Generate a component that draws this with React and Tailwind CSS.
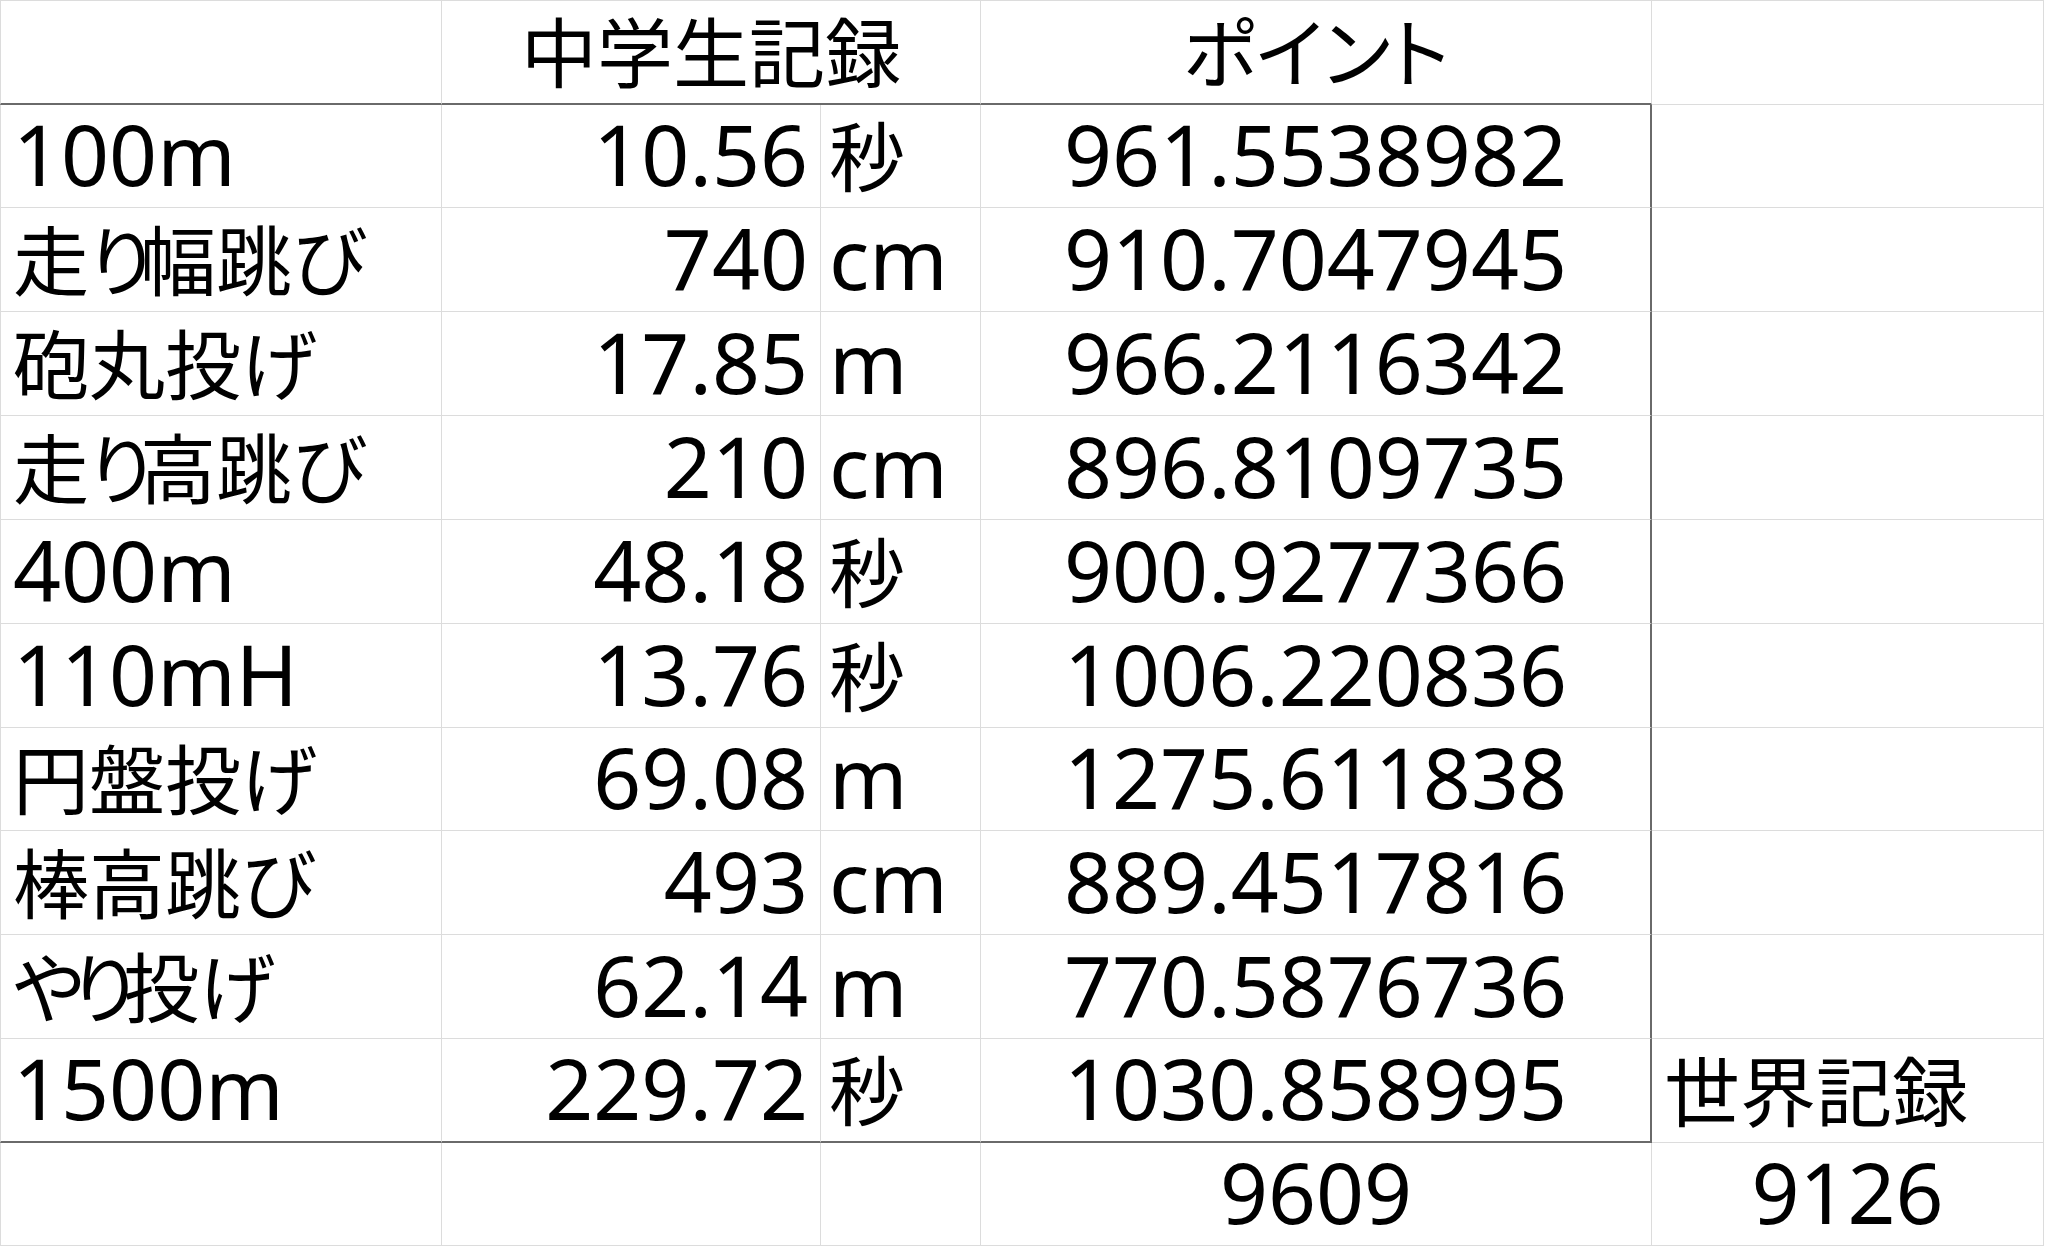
import React from "react";

const rows = [
  ["100m", "10.56", "秒", "961.5538982"],
  ["走り幅跳び", "740", "cm", "910.7047945"],
  ["砲丸投げ", "17.85", "m", "966.2116342"],
  ["走り高跳び", "210", "cm", "896.8109735"],
  ["400m", "48.18", "秒", "900.9277366"],
  ["110mH", "13.76", "秒", "1006.220836"],
  ["円盤投げ", "69.08", "m", "1275.611838"],
  ["棒高跳び", "493", "cm", "889.4517816"],
  ["やり投げ", "62.14", "m", "770.5876736"],
  ["1500m", "229.72", "秒", "1030.858995"],
];

const heights = [105, 103, 104, 104, 104, 104, 104, 103, 104, 104, 104, 103];

const CJK = /([\u3040-\u30ff\u4e00-\u9fff]+)/;
const KANA = /([\u3040-\u309f]+)/;
const isCjk = (s) => /[\u3040-\u30ff\u4e00-\u9fff]/.test(s || "");

function Jp({ text }) {
  const parts = text.split(KANA).filter(Boolean);
  return (
    <span className="text-[76px] [font-family:'Noto_Sans_CJK_JP',sans-serif] [font-feature-settings:'palt']">
      {parts.map((p, i) =>
        /[\u3040-\u309f]/.test(p) ? (
          <span key={i} className="tracking-[-0.16em]">
            {p}
          </span>
        ) : (
          <span key={i}>{p}</span>
        )
      )}
    </span>
  );
}

function T({ text }) {
  const parts = text.split(CJK).filter(Boolean);
  return (
    <>
      {parts.map((p, i) =>
        isCjk(p) ? <Jp key={i} text={p} /> : <span key={i}>{p}</span>
      )}
    </>
  );
}

function Cell({ text, className = "", h }) {
  const pb = isCjk(text) ? "pb-[16px] " : "pb-[11px] ";
  return (
    <div
      className={
        "flex items-end border-b border-r border-[#dcdcdc] leading-none whitespace-nowrap overflow-hidden " +
        pb +
        className
      }
      style={{ height: h }}
    >
      {text ? <T text={text} /> : null}
    </div>
  );
}

export default function App() {
  return (
    <div className="w-[2048px] h-[1246px] bg-white text-black overflow-hidden [font-family:'Noto_Sans','Noto_Sans_CJK_JP',sans-serif] text-[84px]">
      <div className="grid grid-cols-[442px_379px_160px_671px_392px]">
        {/* header */}
        <Cell h={heights[0]} className="border-t border-l border-b-2 border-b-[#6a6a6a]" />
        <Cell
          h={heights[0]}
          text="中学生記録"
          className="col-span-2 justify-center border-t border-b-2 border-b-[#6a6a6a]"
        />
        <Cell
          h={heights[0]}
          text="ポイント"
          className="justify-center border-t border-b-2 border-b-[#6a6a6a]"
        />
        <Cell h={heights[0]} className="border-t" />

        {rows.map((r, i) => {
          const h = heights[i + 1];
          const last = i === rows.length - 1;
          const bb = last ? " border-b-2 border-b-[#6a6a6a]" : "";
          return (
            <React.Fragment key={i}>
              <Cell h={h} text={r[0]} className={"border-l pl-[12px]" + bb} />
              <Cell h={h} text={r[1]} className={"justify-end pr-[12px]" + bb} />
              <Cell h={h} text={r[2]} className={"pl-[8px]" + bb} />
              <Cell
                h={h}
                text={r[3]}
                className={"justify-center border-r-2 border-r-[#6a6a6a]" + bb}
              />
              <Cell h={h} text={last ? "世界記録" : ""} className="pl-[12px]" />
            </React.Fragment>
          );
        })}

        {/* total row */}
        <Cell h={heights[11]} className="border-l" />
        <Cell h={heights[11]} />
        <Cell h={heights[11]} />
        <Cell h={heights[11]} text="9609" className="justify-center" />
        <Cell h={heights[11]} text="9126" className="justify-center" />
      </div>
    </div>
  );
}
